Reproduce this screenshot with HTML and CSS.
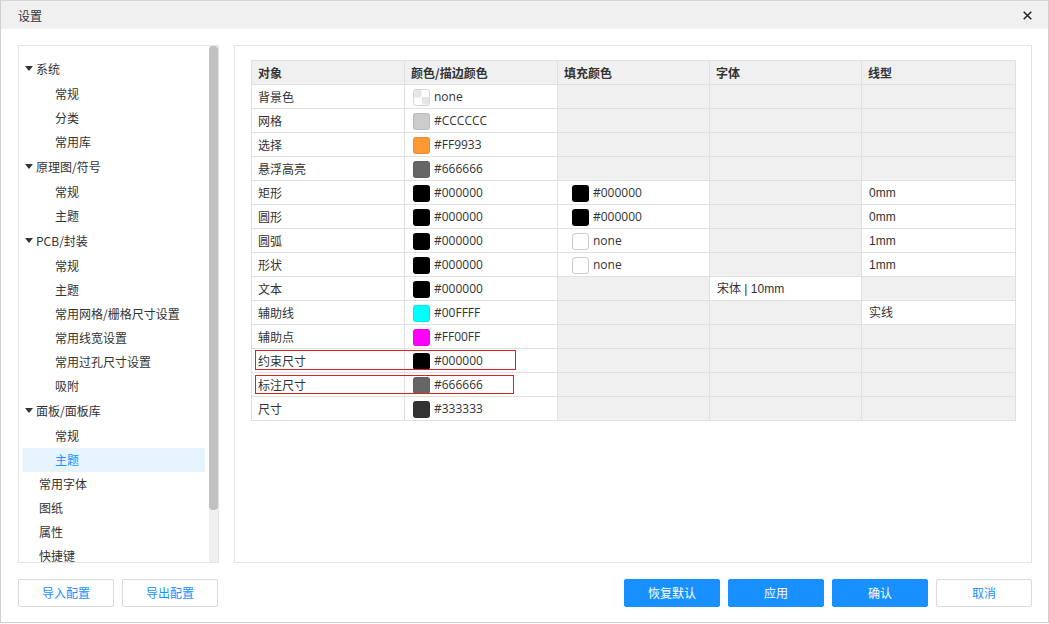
FILE: index.html
```html
<!DOCTYPE html>
<html lang="zh-CN">
<head>
<meta charset="utf-8">
<title>设置</title>
<link rel="stylesheet" href="styles.css">
</head>
<body>
<div class="dialog">
  <div class="titlebar">
    <span class="title">设置</span>
    <span class="close">
      <svg width="9" height="9" viewBox="0 0 9 9"><path d="M0.7 0.7 L8.3 8.3 M8.3 0.7 L0.7 8.3" stroke="#222" stroke-width="1.5" fill="none"/></svg>
    </span>
  </div>

  <div class="content">
    <div class="side">
      <div class="tree">
        <div class="row parent"><span class="arrow"></span>系统</div>
        <div class="row child">常规</div>
        <div class="row child">分类</div>
        <div class="row child">常用库</div>
        <div class="row parent"><span class="arrow"></span>原理图/符号</div>
        <div class="row child">常规</div>
        <div class="row child">主题</div>
        <div class="row parent"><span class="arrow"></span>PCB/封装</div>
        <div class="row child">常规</div>
        <div class="row child">主题</div>
        <div class="row child">常用网格/栅格尺寸设置</div>
        <div class="row child">常用线宽设置</div>
        <div class="row child">常用过孔尺寸设置</div>
        <div class="row child">吸附</div>
        <div class="row parent"><span class="arrow"></span>面板/面板库</div>
        <div class="row child">常规</div>
        <div class="row child selected">主题</div>
        <div class="row leaf">常用字体</div>
        <div class="row leaf">图纸</div>
        <div class="row leaf">属性</div>
        <div class="row leaf">快捷键</div>
      </div>
      <div class="scrolltrack"><div class="thumb"></div></div>
    </div>

    <div class="main">
      <table class="grid">
        <colgroup>
          <col class="c1"><col class="c2"><col class="c3"><col class="c4"><col class="c5">
        </colgroup>
        <thead>
          <tr><th>对象</th><th>颜色/描边颜色</th><th>填充颜色</th><th>字体</th><th>线型</th></tr>
        </thead>
        <tbody>
          <tr><td>背景色</td><td class="clr"><span class="sw sw-none"></span><span class="val">none</span></td><td class="off"></td><td class="off"></td><td class="off"></td></tr>
          <tr><td>网格</td><td class="clr"><span class="sw" style="background:#CCCCCC"></span><span class="val">#CCCCCC</span></td><td class="off"></td><td class="off"></td><td class="off"></td></tr>
          <tr><td>选择</td><td class="clr"><span class="sw" style="background:#FF9933"></span><span class="val">#FF9933</span></td><td class="off"></td><td class="off"></td><td class="off"></td></tr>
          <tr><td>悬浮高亮</td><td class="clr"><span class="sw" style="background:#666666"></span><span class="val">#666666</span></td><td class="off"></td><td class="off"></td><td class="off"></td></tr>
          <tr><td>矩形</td><td class="clr"><span class="sw" style="background:#000000"></span><span class="val">#000000</span></td><td class="clr fill"><span class="sw" style="background:#000000"></span><span class="val">#000000</span></td><td class="off"></td><td class="txt">0mm</td></tr>
          <tr><td>圆形</td><td class="clr"><span class="sw" style="background:#000000"></span><span class="val">#000000</span></td><td class="clr fill"><span class="sw" style="background:#000000"></span><span class="val">#000000</span></td><td class="off"></td><td class="txt">0mm</td></tr>
          <tr><td>圆弧</td><td class="clr"><span class="sw" style="background:#000000"></span><span class="val">#000000</span></td><td class="clr fill"><span class="sw sw-white"></span><span class="val">none</span></td><td class="off"></td><td class="txt">1mm</td></tr>
          <tr><td>形状</td><td class="clr"><span class="sw" style="background:#000000"></span><span class="val">#000000</span></td><td class="clr fill"><span class="sw sw-white"></span><span class="val">none</span></td><td class="off"></td><td class="txt">1mm</td></tr>
          <tr><td>文本</td><td class="clr"><span class="sw" style="background:#000000"></span><span class="val">#000000</span></td><td class="off"></td><td class="txt">宋体 | 10mm</td><td class="off"></td></tr>
          <tr><td>辅助线</td><td class="clr"><span class="sw" style="background:#00FFFF"></span><span class="val">#00FFFF</span></td><td class="off"></td><td class="off"></td><td class="txt">实线</td></tr>
          <tr><td>辅助点</td><td class="clr"><span class="sw" style="background:#FF00FF"></span><span class="val">#FF00FF</span></td><td class="off"></td><td class="off"></td><td class="off"></td></tr>
          <tr><td>约束尺寸</td><td class="clr"><span class="sw" style="background:#000000"></span><span class="val">#000000</span></td><td class="off"></td><td class="off"></td><td class="off"></td></tr>
          <tr><td>标注尺寸</td><td class="clr"><span class="sw" style="background:#666666"></span><span class="val">#666666</span></td><td class="off"></td><td class="off"></td><td class="off"></td></tr>
          <tr><td>尺寸</td><td class="clr"><span class="sw" style="background:#333333"></span><span class="val">#333333</span></td><td class="off"></td><td class="off"></td><td class="off"></td></tr>
        </tbody>
      </table>
      <div class="mark mark-1"></div>
      <div class="mark mark-2"></div>
    </div>
  </div>

  <div class="footer">
    <div class="btns">
      <button class="btn ghost">导入配置</button>
      <button class="btn ghost">导出配置</button>
    </div>
    <div class="btns">
      <button class="btn primary">恢复默认</button>
      <button class="btn primary">应用</button>
      <button class="btn primary">确认</button>
      <button class="btn ghost">取消</button>
    </div>
  </div>
</div>
</body>
</html>
```
FILE: styles.css
```css
html, body {
  margin: 0;
  padding: 0;
  background: #ffffff;
}

body {
  font-family: "Noto Sans CJK SC", "Open Sans", sans-serif;
  font-size: 12px;
  color: #333333;
}

.dialog {
  box-sizing: border-box;
  width: 1049px;
  height: 623px;
  border: 1px solid #cfcfcf;
  border-top-color: #d6d6d6;
  background: #ffffff;
  display: flex;
  flex-direction: column;
}

.titlebar {
  height: 28px;
  flex: none;
  background: #f0f0f0;
  display: flex;
  align-items: center;
  justify-content: space-between;
  padding: 0 16px 0 17px;
}

.title {
  font-size: 12px;
  line-height: 16px;
  color: #333333;
  margin-top: 1px;
}

.close {
  display: flex;
  width: 9px;
  height: 9px;
  margin-top: 1px;
}

.content {
  flex: none;
  display: flex;
  gap: 15px;
  padding: 16px 16px 0 17px;
  height: 518px;
}

.side {
  box-sizing: border-box;
  width: 201px;
  height: 518px;
  border: 1px solid #e4e4e4;
  display: flex;
  flex: none;
}

.tree {
  flex: 1;
  overflow: hidden;
  padding: 10px 4px 0 4px;
}

.row {
  height: 24px;
  line-height: 24px;
  white-space: nowrap;
  color: #333333;
}

.row.parent {
  height: 26px;
  line-height: 26px;
  display: flex;
  align-items: center;
  padding-left: 2px;
}

.arrow {
  width: 0;
  height: 0;
  border-left: 4.5px solid transparent;
  border-right: 4.5px solid transparent;
  border-top: 5px solid #333333;
  margin-right: 3px;
  margin-top: -2px;
}

.row.child {
  padding-left: 32px;
}

.row.leaf {
  padding-left: 16px;
}

.row.selected {
  background: #e6f4fe;
  color: #1890ff;
}

.scrolltrack {
  width: 9px;
  flex: none;
  background: #f0f0f0;
}

.thumb {
  height: 464px;
  background: #c1c1c1;
  border-radius: 4px;
}

.main {
  position: relative;
  box-sizing: border-box;
  flex: 1;
  height: 518px;
  border: 1px solid #e4e4e4;
  padding: 14px 0 0 16px;
}

.grid {
  border-collapse: collapse;
  table-layout: fixed;
  width: 764px;
  border: 1px solid #e0e0e0;
}

.c1 { width: 153px; }
.c2 { width: 153px; }
.c3 { width: 152px; }
.c4 { width: 152px; }
.c5 { width: 154px; }

.grid th,
.grid td {
  border: 1px solid #e0e0e0;
  height: 23px;
  padding: 0 6px;
  text-align: left;
  line-height: 16px;
  white-space: nowrap;
  vertical-align: middle;
}

.grid th {
  background: #f0f0f0;
  font-weight: bold;
  color: #333333;
}

.grid td {
  color: #333333;
}

.grid td.off {
  background: #f0f0f0;
}

.grid td.clr {
  padding-left: 8px;
}

.grid td.clr.fill {
  padding-left: 14px;
}

.grid td.txt {
  font-family: "Liberation Sans", "Noto Sans CJK SC", sans-serif;
  padding-left: 7px;
}

.grid td.clr > * {
  vertical-align: middle;
}

.sw {
  display: inline-block;
  box-sizing: border-box;
  width: 17px;
  height: 17px;
  border-radius: 3px;
  border: 1px solid rgba(0, 0, 0, 0.08);
  margin-right: 4px;
}

.sw-none {
  border: 1px solid #d4d4d4;
  background:
    linear-gradient(#e6e6e6, #e6e6e6) top left / 50% 50% no-repeat,
    linear-gradient(#e6e6e6, #e6e6e6) bottom right / 50% 50% no-repeat,
    #ffffff;
}

.sw-white {
  border: 1px solid #cccccc;
  background: #ffffff;
}

.val {
  font-family: "Open Sans", "Noto Sans CJK SC", sans-serif;
  font-size: 12px;
}

.mark {
  position: absolute;
  box-sizing: border-box;
  border: 1px solid #e02020;
}

.mark-1 {
  left: 20px;
  top: 304px;
  width: 261px;
  height: 20px;
}

.mark-2 {
  left: 20px;
  top: 329px;
  width: 259px;
  height: 19px;
}

.footer {
  flex: none;
  display: flex;
  justify-content: space-between;
  padding: 16px 16px 0 17px;
}

.btns {
  display: flex;
  gap: 8px;
}

.btn {
  box-sizing: border-box;
  width: 96px;
  height: 28px;
  border-radius: 2px;
  font-family: "Noto Sans CJK SC", sans-serif;
  font-size: 12px;
  line-height: 16px;
  padding: 0;
  cursor: pointer;
}

.btn.primary {
  background: #1890ff;
  border: 1px solid #1890ff;
  color: #ffffff;
}

.btn.ghost {
  background: #ffffff;
  border: 1px solid #d9d9d9;
  color: #1890ff;
}
```
